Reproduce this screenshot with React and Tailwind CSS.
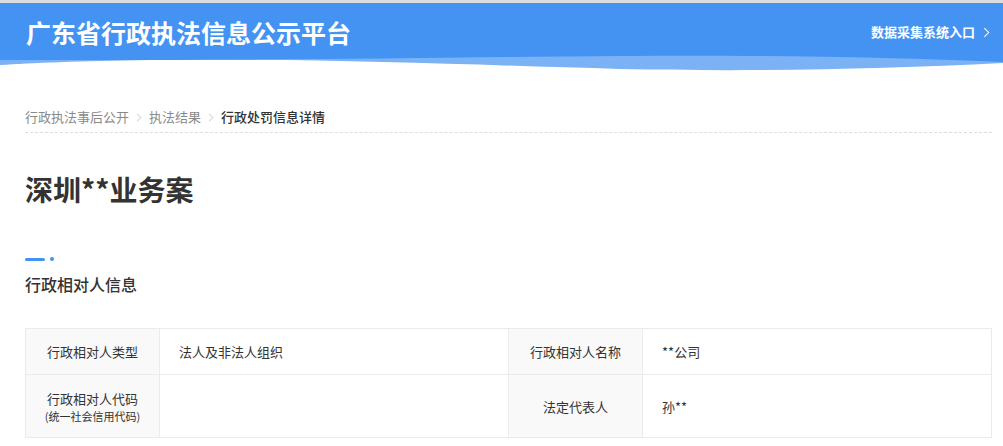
import React from 'react';

const font = { fontFamily: '"Noto Sans CJK SC", "Noto Sans", sans-serif' };

function Chevron({ className }) {
    return (
        <svg viewBox="0 0 8 12" className={className} fill="none" stroke="currentColor" strokeWidth="1.2">
            <polyline points="1.5,1 6.5,6 1.5,11" />
        </svg>
    );
}

function Header() {
    return (
        <div>
            <div className="h-[3px] bg-[#dcdcdc]" />
            <div className="relative h-[70px]">
                {/* wave background */}
                <svg className="absolute inset-0 w-full h-full" viewBox="0 0 1003 70" preserveAspectRatio="none">
                    <path d="M0 0 H1003 V60 C880 66 760 69 620 66 C480 62 300 55 150 57 C80 58 30 60 0 62 Z" fill="#7ab2f5" />
                    <path d="M0 0 H1003 V59 C880 54 760 52 620 53 C480 54 300 57 150 57 C80 57 30 57 0 57 Z" fill="#4493f3" />
                </svg>
                <div className="relative flex items-center justify-between h-[58px] pl-[26px] pr-[13px]">
                    <h1 className="text-[25px] leading-none font-bold text-white">广东省行政执法信息公示平台</h1>
                    <a className="flex items-center gap-[8px] text-[13px] font-bold text-white">
                        数据采集系统入口
                        <Chevron className="w-[7px] h-[11px] text-white" />
                    </a>
                </div>
            </div>
        </div>
    );
}

function Cell({ children, head }) {
    if (head) {
        return (
            <td className="bg-[#f9f9f9] border border-[#ebebeb] text-center text-[13px] text-[#333] leading-[19px]">
                {children}
            </td>
        );
    }
    return (
        <td className="border border-[#ebebeb] pl-[19px] text-[13px] text-[#333] leading-[19px]">
            {children}
        </td>
    );
}

export default function App() {
    return (
        <div className="bg-white min-h-[446px] text-[#333]" style={font}>
            <Header />

            <div className="pl-[25px] pr-[11px]">
                {/* Breadcrumb */}
                <div className="pt-[34px] pb-[5px] border-b border-dashed border-[#dedede] flex items-center text-[13px] leading-[20px]">
                    <span className="text-[#8a8a8a]">行政执法事后公开</span>
                    <Chevron className="w-[6px] h-[9px] mx-[7px] text-[#bbb]" />
                    <span className="text-[#8a8a8a]">执法结果</span>
                    <Chevron className="w-[6px] h-[9px] mx-[7px] text-[#bbb]" />
                    <span className="text-[#333] font-medium">行政处罚信息详情</span>
                </div>

                {/* Title */}
                <h2 className="mt-[36px] text-[28px] leading-[40px] font-bold text-[#333]">深圳**业务案</h2>

                {/* Section heading */}
                <div className="mt-[48px] flex items-center gap-[5px]">
                    <div className="w-[20px] h-[3px] rounded-full bg-[#4493f3]" />
                    <div className="w-[4px] h-[4px] rounded-full bg-[#4493f3]" />
                </div>
                <h3 className="mt-[11px] text-[16px] leading-[24px] font-medium text-[#333]">行政相对人信息</h3>

                {/* Table */}
                <table className="mt-[32px] w-[967px] border-collapse table-fixed">
                    <colgroup>
                        <col className="w-[134px]" />
                        <col className="w-[349px]" />
                        <col className="w-[134px]" />
                        <col />
                    </colgroup>
                    <tbody>
                        <tr className="h-[46px]">
                            <Cell head>行政相对人类型</Cell>
                            <Cell>法人及非法人组织</Cell>
                            <Cell head>行政相对人名称</Cell>
                            <Cell>**公司</Cell>
                        </tr>
                        <tr className="h-[63px]">
                            <Cell head>
                                <div>行政相对人代码</div>
                                <div className="text-[11px] leading-[16px]">(统一社会信用代码)</div>
                            </Cell>
                            <Cell></Cell>
                            <Cell head>法定代表人</Cell>
                            <Cell>孙**</Cell>
                        </tr>
                    </tbody>
                </table>
            </div>
        </div>
    );
}
